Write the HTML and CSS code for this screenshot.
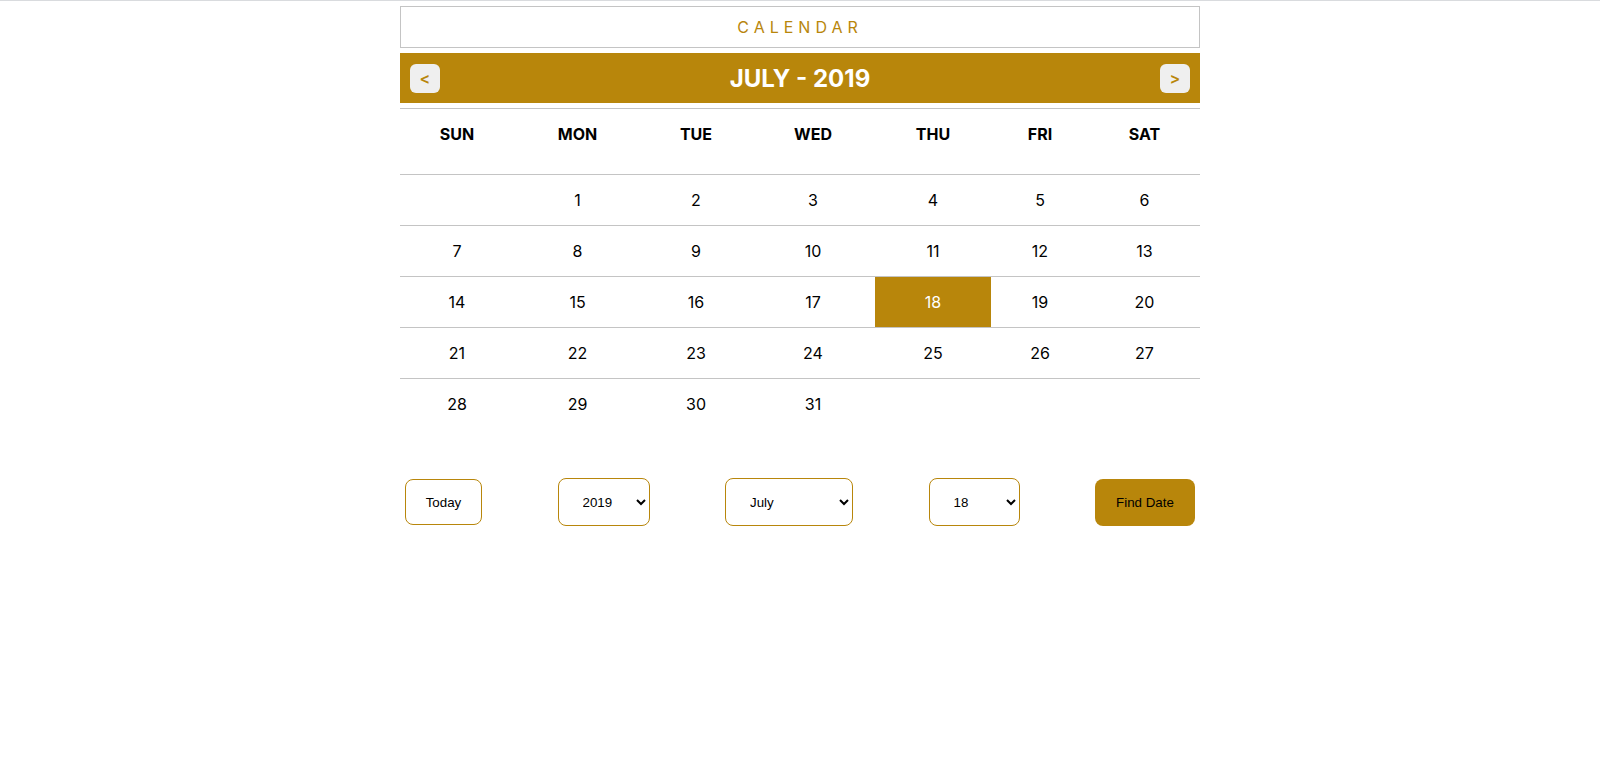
FILE: index.html
```html
<!DOCTYPE html>
<html lang="en">
<head>
<meta charset="utf-8">
<title>Calendar</title>
<link rel="stylesheet" href="styles.css">
</head>
<body>
<div class="calendar">
  <div class="title">CALENDAR</div>
  <div class="header">
    <button class="nav">&lt;</button>
    <div class="month">JULY - 2019</div>
    <button class="nav">&gt;</button>
  </div>
  <div class="grid">
    <div class="wd">SUN</div><div class="wd">MON</div><div class="wd">TUE</div><div class="wd">WED</div><div class="wd">THU</div><div class="wd">FRI</div><div class="wd">SAT</div>
    <div class="d"></div><div class="d">1</div><div class="d">2</div><div class="d">3</div><div class="d">4</div><div class="d">5</div><div class="d">6</div>
    <div class="d">7</div><div class="d">8</div><div class="d">9</div><div class="d">10</div><div class="d">11</div><div class="d">12</div><div class="d">13</div>
    <div class="d">14</div><div class="d">15</div><div class="d">16</div><div class="d">17</div><div class="d today">18</div><div class="d">19</div><div class="d">20</div>
    <div class="d">21</div><div class="d">22</div><div class="d">23</div><div class="d">24</div><div class="d">25</div><div class="d">26</div><div class="d">27</div>
    <div class="d last">28</div><div class="d last">29</div><div class="d last">30</div><div class="d last">31</div><div class="d last"></div><div class="d last"></div><div class="d last"></div>
  </div>
  <div class="controls">
    <button class="btn btn-today">Today</button>
    <select class="sel sel-year">
      <option>2017</option><option>2018</option><option selected>2019</option><option>2020</option><option>2021</option>
    </select>
    <select class="sel sel-month">
      <option>January</option><option>February</option><option>March</option><option>April</option><option>May</option><option>June</option><option selected>July</option><option>August</option><option>September</option><option>October</option><option>November</option><option>December</option>
    </select>
    <select class="sel sel-day">
      <option>16</option><option>17</option><option selected>18</option><option>19</option><option>20</option>
    </select>
    <button class="btn btn-find">Find Date</button>
  </div>
</div>
</body>
</html>
```

FILE: styles.css
```css
html, body {
  margin: 0;
  padding: 0;
  background: #ffffff;
}

body {
  border-top: 1px solid #d9dbde;
  font-family: Inter, "Noto Sans", sans-serif;
  color: #000000;
}

.calendar {
  width: 800px;
  margin: 5px auto 0;
}

.title {
  height: 42px;
  box-sizing: border-box;
  border: 1px solid #c4c4c4;
  display: flex;
  align-items: center;
  justify-content: center;
  font-size: 16px;
  letter-spacing: 5px;
  color: #b8860b;
}

.header {
  margin-top: 5px;
  height: 50px;
  background: #b8860b;
  display: flex;
  align-items: center;
  justify-content: space-between;
  padding: 0 10px;
}

.nav {
  width: 30px;
  height: 29px;
  border: none;
  border-radius: 6px;
  background: #efefef;
  color: #b8860b;
  font-family: Inter, sans-serif;
  font-weight: 600;
  font-size: 16px;
  padding: 0;
  cursor: pointer;
}

.month {
  color: #ffffff;
  font-weight: 700;
  font-size: 24px;
}

.grid {
  margin-top: 5px;
  border-top: 1px solid #c4c4c4;
  display: grid;
  grid-template-columns: 114px 127px 110px 124px 116px 98px 111px;
}

.wd {
  display: flex;
  justify-content: center;
  align-items: flex-start;
  padding-top: 15px;
  height: 50px;
  line-height: 20px;
  font-weight: 700;
  font-size: 16px;
  border-bottom: 1px solid #c4c4c4;
}

.d {
  height: 50px;
  display: flex;
  align-items: center;
  justify-content: center;
  font-size: 16px;
  border-bottom: 1px solid #c4c4c4;
}

.d.last {
  border-bottom: none;
}

.d.today {
  background: #b8860b;
  color: #ffffff;
}

.controls {
  margin-top: 49px;
  padding: 0 5px;
  height: 48px;
  display: flex;
  align-items: center;
  justify-content: space-between;
}

.btn, .sel {
  font-family: "Liberation Sans", Arial, sans-serif;
  font-size: 13.33px;
  color: #000000;
  border-radius: 8px;
  box-sizing: border-box;
}

.btn-today {
  width: 77px;
  height: 46px;
  background: #ffffff;
  border: 1px solid #b8860b;
}

.sel {
  height: 48px;
  background: #ffffff;
  border: 1px solid #b8860b;
  padding: 0 6px 0 20px;
}

.sel-year { width: 92px; }
.sel-month { width: 128px; }
.sel-day { width: 91px; }

.btn-find {
  width: 100px;
  height: 47px;
  background: #b8860b;
  border: none;
}
```
